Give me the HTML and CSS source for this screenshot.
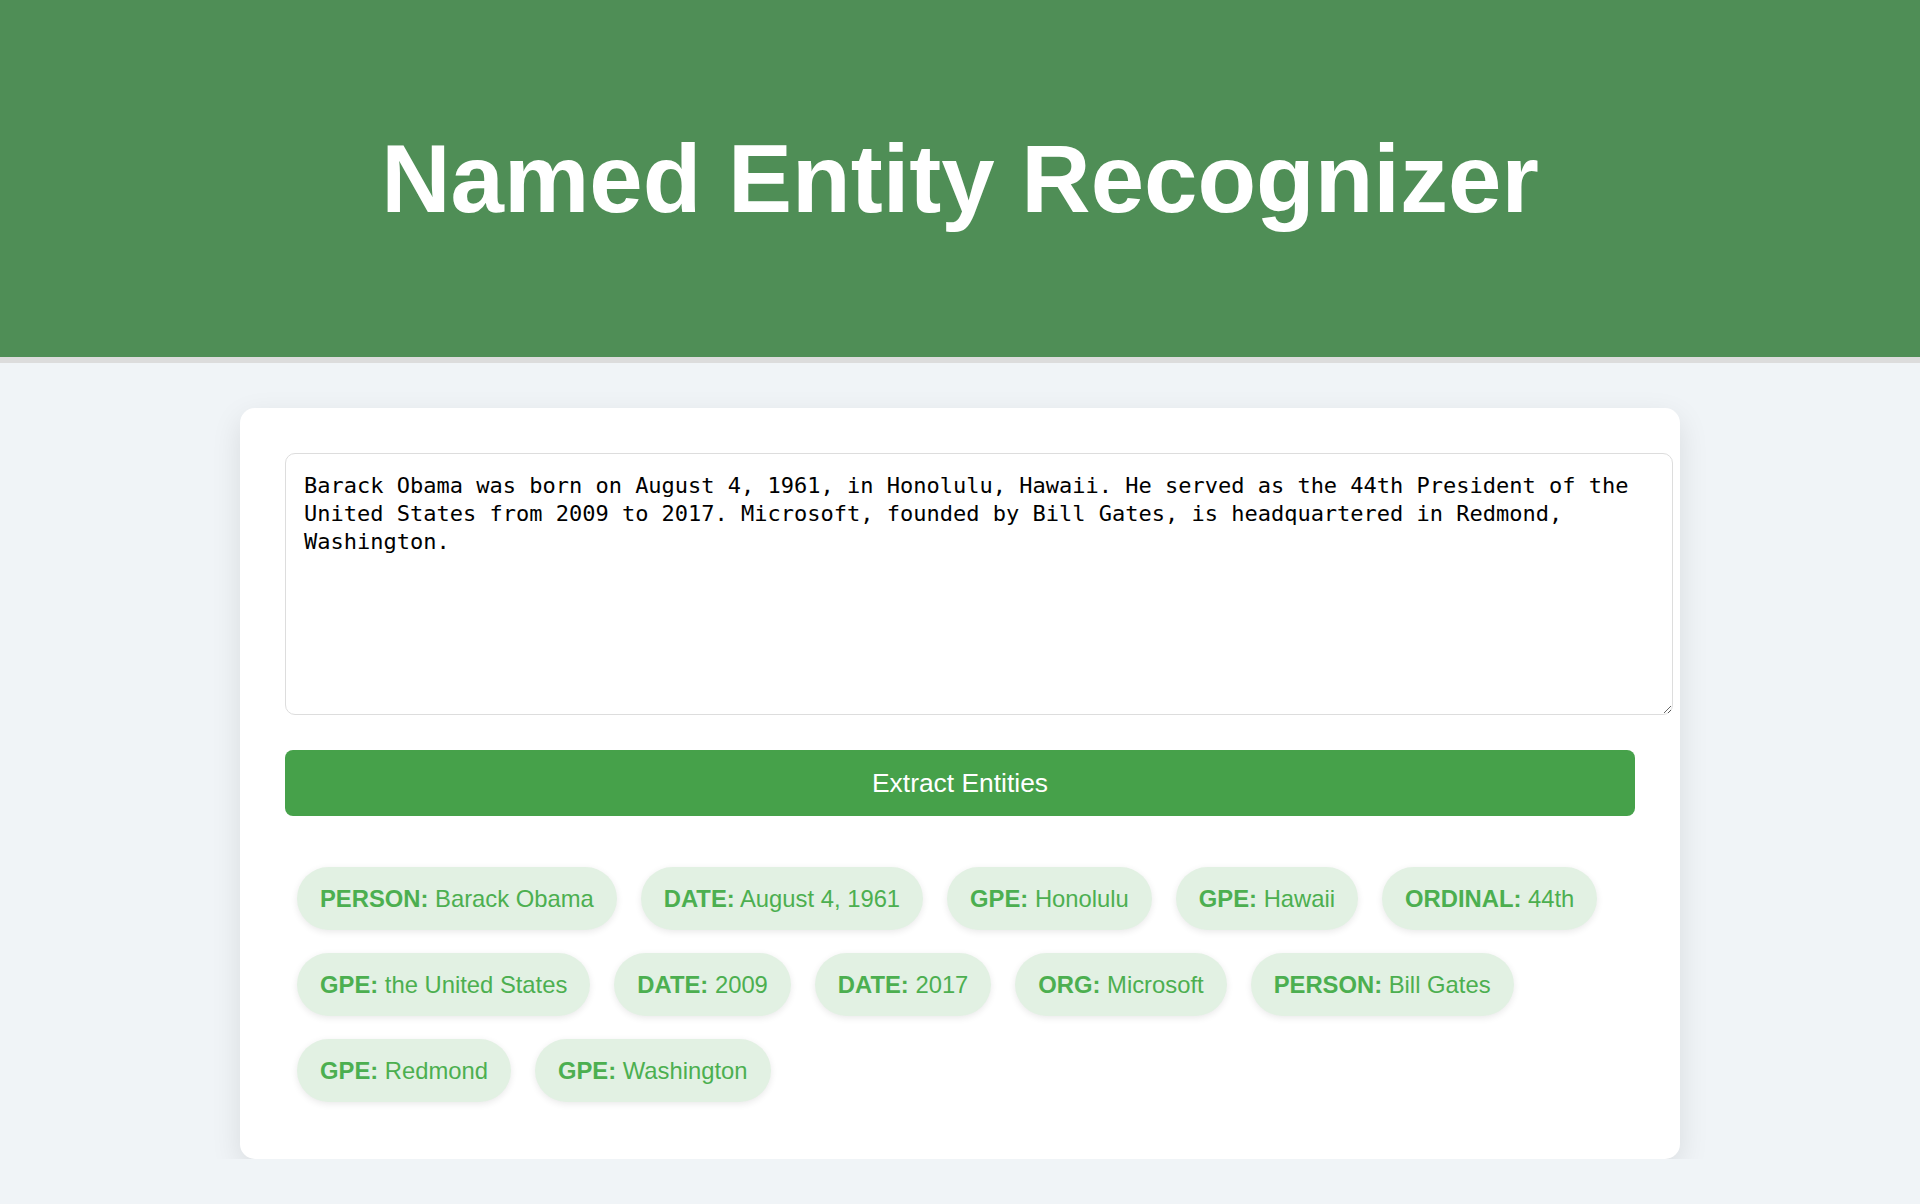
FILE: index.html
```html
<!DOCTYPE html>
<html lang="en">
<head>
<meta charset="utf-8">
<title>Named Entity Recognizer</title>
<link rel="stylesheet" href="styles.css">
</head>
<body>
<header class="site-header">
  <h1 class="title">Named Entity Recognizer</h1>
</header>
<main class="card">
  <textarea class="input-text">Barack Obama was born on August 4, 1961, in Honolulu, Hawaii. He served as the 44th President of the United States from 2009 to 2017. Microsoft, founded by Bill Gates, is headquartered in Redmond, Washington.</textarea>
  <button class="extract-btn" type="button">Extract Entities</button>
  <div class="results">
    <span class="chip"><strong>PERSON:</strong> Barack Obama</span>
    <span class="chip"><strong>DATE:</strong> August 4, 1961</span>
    <span class="chip"><strong>GPE:</strong> Honolulu</span>
    <span class="chip"><strong>GPE:</strong> Hawaii</span>
    <span class="chip"><strong>ORDINAL:</strong> 44th</span>
    <span class="chip"><strong>GPE:</strong> the United States</span>
    <span class="chip"><strong>DATE:</strong> 2009</span>
    <span class="chip"><strong>DATE:</strong> 2017</span>
    <span class="chip"><strong>ORG:</strong> Microsoft</span>
    <span class="chip"><strong>PERSON:</strong> Bill Gates</span>
    <span class="chip"><strong>GPE:</strong> Redmond</span>
    <span class="chip"><strong>GPE:</strong> Washington</span>
  </div>
</main>
</body>
</html>
```

FILE: styles.css
```css
html, body {
  margin: 0;
  padding: 0;
}

body {
  background: #f0f4f7;
  font-family: "Liberation Sans", Arial, sans-serif;
  color: #222;
}

.site-header {
  height: 357px;
  background: #4f8e56;
  border-bottom: 6px solid #dcdcdc;
  display: flex;
  align-items: center;
  justify-content: center;
}

.title {
  margin: 0;
  color: #ffffff;
  font-size: 96px;
  font-weight: bold;
  line-height: normal;
}

.card {
  box-sizing: border-box;
  width: 1440px;
  margin: 45px auto 0;
  padding: 45px;
  background: #ffffff;
  border-radius: 15px;
  box-shadow: 0 10px 30px rgba(0, 0, 0, 0.1);
  display: flex;
  flex-direction: column;
  align-items: flex-start;
}

.input-text {
  display: block;
  width: 100%;
  height: 224px;
  padding: 18px;
  border: 1px solid #dddddd;
  border-radius: 10px;
  font-family: "DejaVu Sans Mono", "Liberation Mono", monospace;
  font-size: 22px;
  line-height: 28px;
  color: #000;
  background: #fff;
  margin: 0;
}

.extract-btn {
  display: block;
  width: 100%;
  height: 66px;
  margin-top: 35px;
  border: none;
  border-radius: 8px;
  background: #46a14a;
  color: #ffffff;
  font-family: "Liberation Sans", Arial, sans-serif;
  font-size: 26.4px;
  cursor: pointer;
}

.results {
  box-sizing: border-box;
  width: 100%;
  margin-top: 51px;
  padding: 0 12px 12px;
  display: flex;
  flex-wrap: wrap;
  gap: 23px 24px;
}

.chip {
  display: inline-block;
  padding: 18px 23px;
  line-height: 27px;
  font-size: 23.8px;
  color: #4caf50;
  background: #e2f1e3;
  border-radius: 32px;
  box-shadow: 0 2px 7px rgba(0, 0, 0, 0.09);
}

.chip strong {
  font-weight: bold;
}
```
